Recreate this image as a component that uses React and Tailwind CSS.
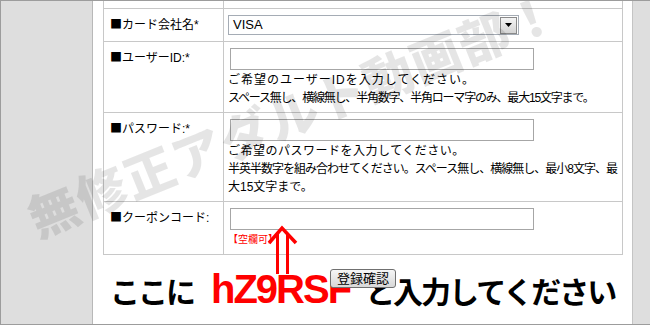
import React from "react";

const jp = { fontFamily: '"Liberation Sans", "Noto Sans CJK JP", sans-serif' };
const noto = { fontFamily: '"Noto Sans CJK JP", sans-serif' };

function Label({ children }) {
  return (
    <div className="w-[120px] shrink-0 border-r border-[#c8c8c8] pl-[6px] pt-[8px] text-[12px] leading-[14px] text-black whitespace-nowrap">
      <span style={noto}>■</span>
      {children}
    </div>
  );
}

function TextInput() {
  return <div className="ml-[2px] w-[304px] h-[22px] border border-[#a6a6a6] bg-white" />;
}

export default function App() {
  return (
    <div
      className="relative w-[650px] h-[325px] overflow-hidden bg-white border-t border-l border-b border-[#9c9c9c] flex"
      style={jp}
    >
      <div className="w-[92px] shrink-0 bg-[#dedede] border-r border-[#b8b8b8]" />

      <div className="w-[539px] shrink-0 pl-[10px] flex flex-col">
        <div className="w-[520px] border-l border-r border-[#c8c8c8]">
          {/* partial row */}
          <div className="flex h-[8px] border-b border-[#c8c8c8]">
            <div className="w-[120px] shrink-0 border-r border-[#c8c8c8]" />
            <div className="flex-1" />
          </div>

          {/* card company */}
          <div className="flex h-[33px] border-b border-[#c8c8c8]">
            <Label>カード会社名*</Label>
            <div className="flex-1 pl-[4px] pt-[6px]">
              <div className="w-[291px] h-[20px] border border-[#a5acb5] bg-white flex items-center justify-between">
                <span
                  className="pl-[4px] text-[13px] leading-[18px] text-black"
                  style={{ fontFamily: '"Liberation Sans", sans-serif' }}
                >
                  VISA
                </span>
                <div className="w-[17px] h-[17px] mr-px border border-[#8a8a8a] bg-gradient-to-b from-[#f4f4f4] to-[#d4d4d4] flex items-center justify-center">
                  <svg width="7" height="4" viewBox="0 0 7 4">
                    <path d="M0 0 H7 L3.5 4 Z" fill="#000" />
                  </svg>
                </div>
              </div>
            </div>
          </div>

          {/* user id */}
          <div className="flex h-[71px] border-b border-[#c8c8c8]">
            <Label>ユーザーID:*</Label>
            <div className="flex-1 pl-[4px] pt-[6px]">
              <TextInput />
              <div className="mt-px text-[12px] leading-[18px] text-black whitespace-nowrap">
                <div className="tracking-[1px]">ご希望のユーザーIDを入力してください。</div>
                <div className="tracking-[-1.2px]">
                  スペース無し、横線無し、半角数字、半角ローマ字のみ、最大15文字まで。
                </div>
              </div>
            </div>
          </div>

          {/* password */}
          <div className="flex h-[89px] border-b border-[#c8c8c8]">
            <Label>パスワード:*</Label>
            <div className="flex-1 pl-[4px] pt-[6px]">
              <TextInput />
              <div className="mt-px text-[12px] leading-[18px] text-black whitespace-nowrap">
                <div className="tracking-[0.5px]">ご希望のパスワードを入力してください。</div>
                <div className="tracking-[-1px]">
                  半英半数字を組み合わせてください。スペース無し、横線無し、最小8文字、最
                </div>
                <div>大15文字まで。</div>
              </div>
            </div>
          </div>

          {/* coupon */}
          <div className="flex h-[53px] border-b border-[#c8c8c8]">
            <Label>クーポンコード:</Label>
            <div className="flex-1 pl-[4px] pt-[6px]">
              <TextInput />
              <div className="mt-px text-[10px] leading-[18px] text-[#ff0000] whitespace-nowrap">
                【空欄可】
              </div>
            </div>
          </div>
        </div>

        <div className="w-[520px] flex justify-center pt-[14px]">
          <button className="relative z-20 w-[66px] h-[19px] rounded-[3px] border border-[#707070] bg-gradient-to-b from-[#f6f6f6] to-[#d8d8d8] text-[13px] leading-[15px] text-black">
            登録確認
          </button>
        </div>
      </div>

      <div className="flex-1 bg-[#dedede] border-l border-[#c4c4c4]" />

      {/* watermark */}
      <div
        className="pointer-events-none absolute left-[8px] top-[86px] w-[566px] h-[50px] text-center text-[50px] leading-[50px] font-black tracking-[1.5px] text-[rgba(0,0,0,0.1)] whitespace-nowrap rotate-[-22deg] z-10"
        style={noto}
      >
        無修正アダルト動画部！
      </div>

      {/* arrow */}
      <svg
        className="pointer-events-none absolute left-[264px] top-[222px] z-10"
        width="36"
        height="54"
        viewBox="0 0 36 54"
      >
        <polyline points="4,20 17,5 31,20" fill="none" stroke="#ff0000" strokeWidth="3.5" />
        <rect x="11" y="10" width="3" height="41" fill="#ff0000" />
        <rect x="21" y="10" width="3" height="41" fill="#ff0000" />
      </svg>

      {/* annotation */}
      <div className="pointer-events-none absolute left-[109px] top-[268px] flex items-baseline whitespace-nowrap font-bold z-10">
        <span className="text-[30px] leading-[40px] tracking-[-2px] text-black" style={noto}>
          ここに
        </span>
        <span
          className="ml-[17px] text-[40px] leading-[40px] tracking-[-2px] text-[#ff0000]"
          style={{ fontFamily: '"Liberation Sans", sans-serif' }}
        >
          hZ9RSF
        </span>
        <span className="ml-[15px] text-[30px] leading-[40px] tracking-[-2px] text-black" style={noto}>
          と入力してください
        </span>
      </div>
    </div>
  );
}
